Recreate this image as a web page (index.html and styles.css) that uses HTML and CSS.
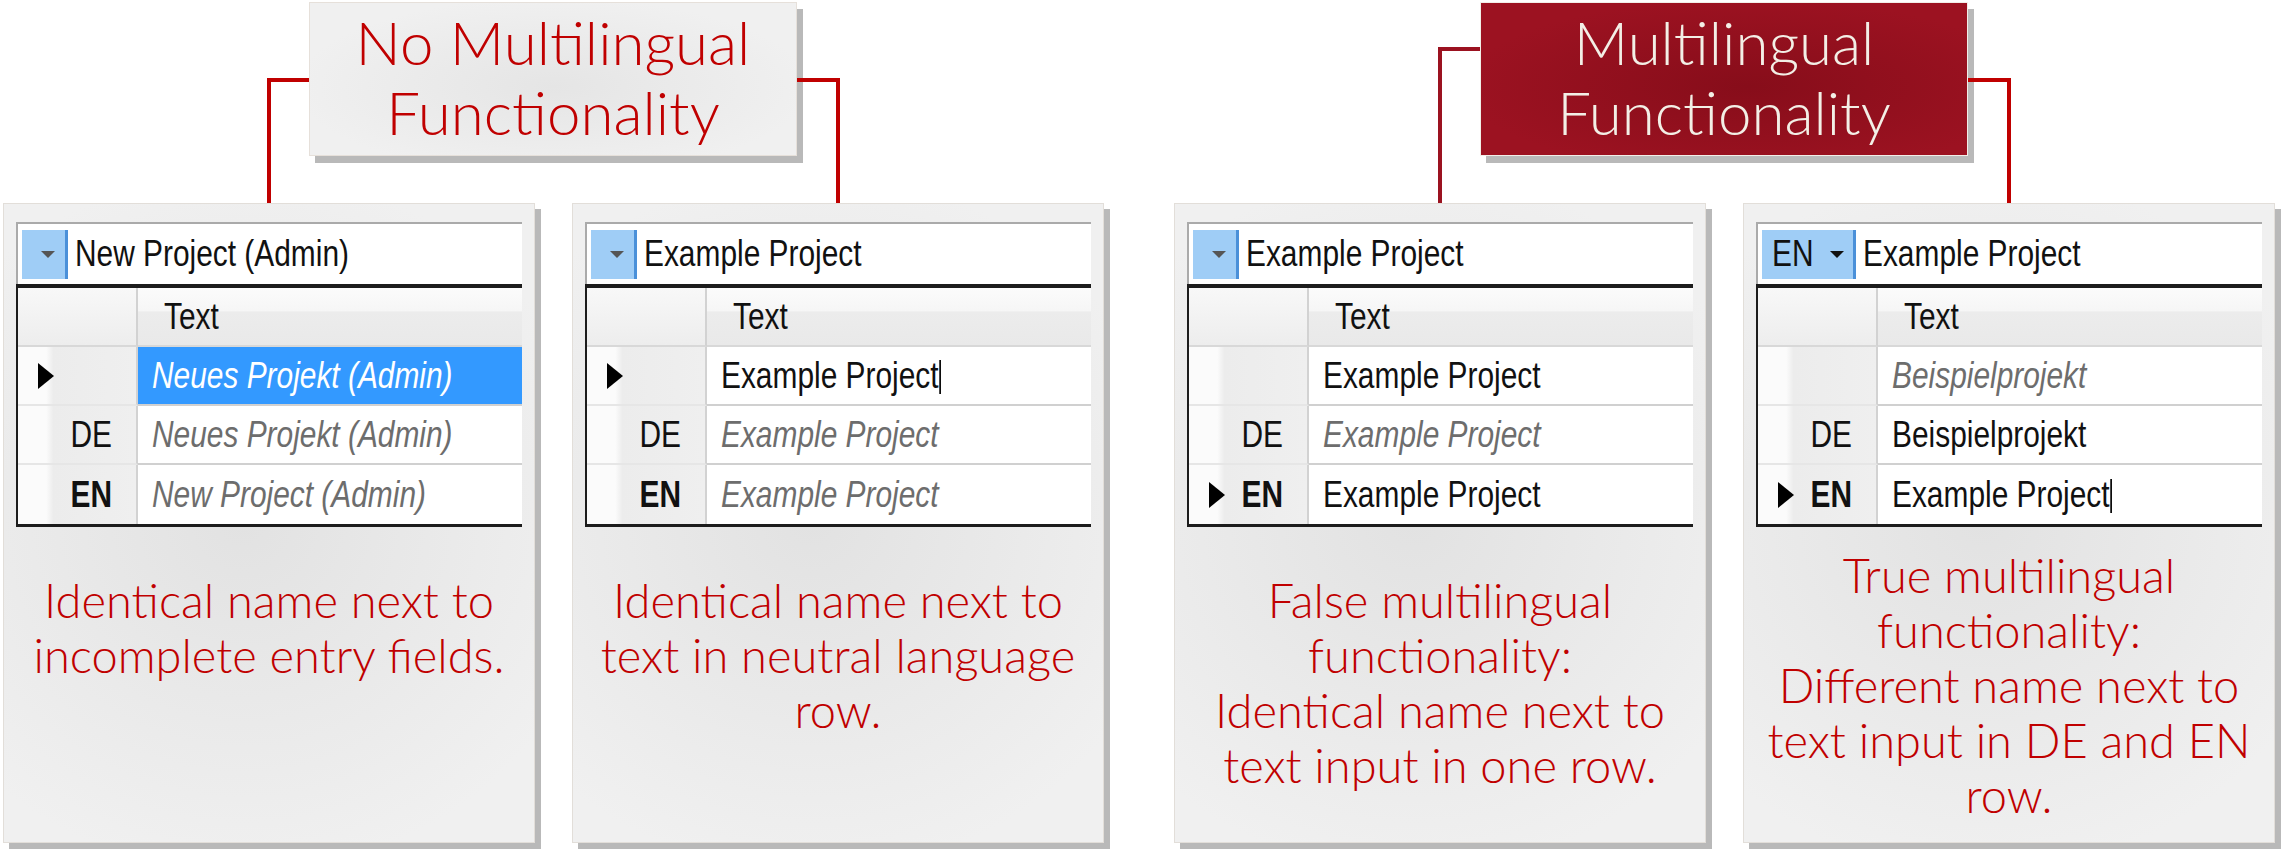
FILE: index.html
```html
<!DOCTYPE html>
<html lang="en">
<head>
    <meta charset="UTF-8">
    <title>Multilingual Functionality</title>
    <link rel="stylesheet" href="styles.css">
</head>
<body>
    <main class="slide">
        <!-- left half: no multilingual -->
        <section class="group">
            <div class="group-head">
                <div class="leg leg-left"></div>
                <div class="title-box">No Multilingual<br>Functionality</div>
                <div class="leg leg-right"></div>
            </div>
            <div class="cards">
                <article class="card">
                    <div class="combo">
                        <span class="drop"><i class="arrow"></i></span>
                        <span class="txt">New Project (Admin)</span>
                    </div>
                    <div class="grid">
                        <div class="corner"></div>
                        <div class="col-head"><span class="txt">Text</span></div>
                        <div class="rh"><i class="marker"></i></div>
                        <div class="cell ghost selected"><span class="txt">Neues Projekt (Admin)</span></div>
                        <div class="rh"><span class="txt label">DE</span></div>
                        <div class="cell ghost"><span class="txt">Neues Projekt (Admin)</span></div>
                        <div class="rh"><span class="txt label bold">EN</span></div>
                        <div class="cell ghost"><span class="txt">New Project (Admin)</span></div>
                    </div>
                    <p class="caption">Identical name next to<br>incomplete entry fields.</p>
                </article>
                <article class="card">
                    <div class="combo">
                        <span class="drop"><i class="arrow"></i></span>
                        <span class="txt">Example Project</span>
                    </div>
                    <div class="grid">
                        <div class="corner"></div>
                        <div class="col-head"><span class="txt">Text</span></div>
                        <div class="rh"><i class="marker"></i></div>
                        <div class="cell"><span class="txt">Example Project<i class="caret"></i></span></div>
                        <div class="rh"><span class="txt label">DE</span></div>
                        <div class="cell ghost"><span class="txt">Example Project</span></div>
                        <div class="rh"><span class="txt label bold">EN</span></div>
                        <div class="cell ghost"><span class="txt">Example Project</span></div>
                    </div>
                    <p class="caption">Identical name next to<br>text in neutral language<br>row.</p>
                </article>
            </div>
        </section>

        <!-- right half: multilingual -->
        <section class="group group-ml">
            <div class="group-head">
                <div class="leg leg-left"></div>
                <div class="title-box">Multilingual<br>Functionality</div>
                <div class="leg leg-right"></div>
            </div>
            <div class="cards">
                <article class="card">
                    <div class="combo">
                        <span class="drop"><i class="arrow"></i></span>
                        <span class="txt">Example Project</span>
                    </div>
                    <div class="grid">
                        <div class="corner"></div>
                        <div class="col-head"><span class="txt">Text</span></div>
                        <div class="rh"></div>
                        <div class="cell"><span class="txt">Example Project</span></div>
                        <div class="rh"><span class="txt label">DE</span></div>
                        <div class="cell ghost"><span class="txt">Example Project</span></div>
                        <div class="rh"><i class="marker"></i><span class="txt label bold">EN</span></div>
                        <div class="cell"><span class="txt">Example Project</span></div>
                    </div>
                    <p class="caption">False multilingual<br>functionality:<br>Identical name next to<br>text input in one row.</p>
                </article>
                <article class="card">
                    <div class="combo">
                        <span class="drop drop-lang"><span class="txt">EN</span><i class="arrow"></i></span>
                        <span class="txt">Example Project</span>
                    </div>
                    <div class="grid">
                        <div class="corner"></div>
                        <div class="col-head"><span class="txt">Text</span></div>
                        <div class="rh"></div>
                        <div class="cell ghost"><span class="txt">Beispielprojekt</span></div>
                        <div class="rh"><span class="txt label">DE</span></div>
                        <div class="cell"><span class="txt">Beispielprojekt</span></div>
                        <div class="rh"><i class="marker"></i><span class="txt label bold">EN</span></div>
                        <div class="cell"><span class="txt">Example Project<i class="caret"></i></span></div>
                    </div>
                    <p class="caption caption-high">True multilingual<br>functionality:<br>Different name next to<br>text input in DE and EN<br>row.</p>
                </article>
            </div>
        </section>
    </main>
</body>
</html>
```

FILE: styles.css
```css
* {
    box-sizing: border-box;
}

body {
    margin: 0;
    background: #fff;
    font-family: Lato, "Open Sans", sans-serif;
}

.slide {
    display: flex;
    gap: 70px;
    width: 2282px;
    height: 854px;
    padding-left: 3px;
}

.group {
    width: 1101px;
}

/* title box + red connector lines */
.group-head {
    display: flex;
    align-items: flex-end;
    height: 203px;
    padding-left: 264px;
}

.leg {
    height: 125px;
    border-top: 4px solid #c00000;
}

.leg-left {
    width: 42px;
    border-left: 4px solid #c00000;
}

.leg-right {
    width: 43px;
    border-right: 4px solid #c00000;
}

.title-box {
    align-self: flex-start;
    margin-top: 2px;
    width: 488px;
    height: 154px;
    display: flex;
    align-items: center;
    justify-content: center;
    padding-bottom: 4px;
    text-align: center;
    font-size: 60px;
    font-weight: 300;
    line-height: 70px;
    color: #c00000;
    background: radial-gradient(ellipse at 50% 55%, #e5e5e5 0%, #f0f0f0 75%);
    border: 1px solid #e6e0da;
    box-shadow: 6px 7px 0 #b9b9b9;
}

.group-ml .title-box {
    color: #f3efe6;
    background: radial-gradient(ellipse at 55% 55%, #870d1a 0%, #9c1221 75%);
    border-color: #f2eee8;
}

.group-ml .leg-left {
    height: 156px;
    border-color: #9b1220;
}

/* cards */
.cards {
    display: flex;
    gap: 37px;
}

.card {
    width: 532px;
    height: 640px;
    padding: 18px 12px 0;
    background: radial-gradient(ellipse 70% 55% at 45% 50%, #e2e2e2 0%, #f0f0f0 100%);
    border: 1px solid #e2ded9;
    box-shadow: 6px 6px 0 #b9b9b9;
}

/* the grid screenshot */
.combo,
.grid {
    font-family: "Liberation Sans", Arial, sans-serif;
    font-size: 36px;
    color: #111;
}

/* the screenshot is squeezed horizontally */
.txt {
    display: inline-block;
    white-space: nowrap;
    transform: scaleX(.83);
    transform-origin: 0 50%;
}

.combo {
    display: flex;
    align-items: center;
    height: 62px;
    padding-left: 4px;
    background: #fff;
    border-top: 2px solid #aaa;
    border-left: 2px solid #aaa;
}

.drop {
    display: flex;
    align-items: center;
    justify-content: flex-end;
    width: 46px;
    height: 49px;
    margin-right: 7px;
    padding-right: 10px;
    background: #9fcdf6;
    border-right: 3px solid #4a90d9;
}

.drop-lang {
    width: 94px;
    justify-content: space-between;
    padding: 0 9px 0 10px;
}

.arrow {
    border-top: 7px solid #555;
    border-left: 7px solid transparent;
    border-right: 7px solid transparent;
}

.drop-lang .arrow {
    border-top-color: #111;
}

.grid {
    display: grid;
    grid-template-columns: 120px 1fr;
    grid-auto-rows: 59px;
    border-top: 4px solid #1c1c1c;
    border-left: 2px solid #1c1c1c;
    border-bottom: 3px solid #1c1c1c;
}

.corner {
    background: linear-gradient(#f8f8f8, #ededed);
    border-right: 2px solid #d2d2d2;
    border-bottom: 2px solid #d8d8d8;
}

.col-head {
    display: flex;
    align-items: center;
    padding-left: 26px;
    background: linear-gradient(#fbfbfb 0%, #f6f6f6 40%, #ececec 42%, #e9e9e9 100%);
    border-bottom: 2px solid #d8d8d8;
}

.rh {
    display: flex;
    align-items: center;
    padding: 0 24px 0 20px;
    background: linear-gradient(to right, #fbfbfb 0, #fbfbfb 24%, #ececec 30%, #efefef 100%);
    border-right: 2px solid #d2d2d2;
    border-bottom: 2px solid #e6e6e6;
}

.rh .label {
    margin-left: auto;
    transform-origin: 100% 50%;
}

.label.bold {
    font-weight: bold;
}

.marker {
    border-left: 16px solid #000;
    border-top: 13px solid transparent;
    border-bottom: 13px solid transparent;
}

.cell {
    display: flex;
    align-items: center;
    padding-left: 14px;
    background: #fff;
    border-bottom: 2px solid #d0d0d0;
}

.cell.ghost {
    font-style: italic;
    color: #6d6d6d;
}

.cell.selected {
    background: #3399ff;
    color: #fff;
}

.grid > :nth-last-child(-n+2) {
    border-bottom: 0;
}

.caret {
    display: inline-block;
    vertical-align: -6px;
    width: 2px;
    height: 34px;
    margin-left: 1px;
    background: #000;
}

/* captions */
.caption {
    margin: 46px 0 0;
    text-align: center;
    font-size: 47px;
    font-weight: 300;
    line-height: 55px;
    color: #c00000;
}

.caption-high {
    margin-top: 21px;
}
```
